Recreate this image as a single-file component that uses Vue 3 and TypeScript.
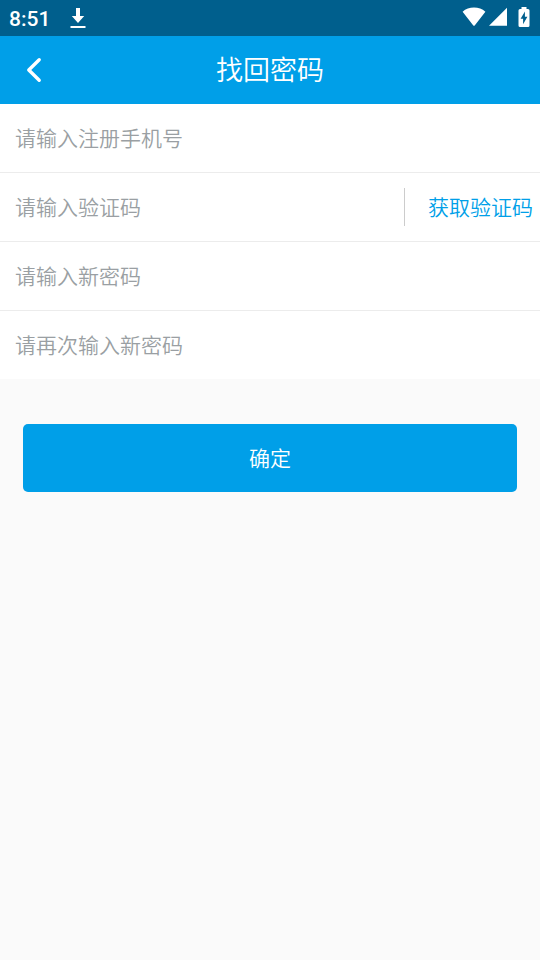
<script setup lang="ts">
import { reactive } from 'vue'

interface Field {
  key: 'phone' | 'code' | 'password' | 'confirm'
  type: string
  placeholder: string
}

const fields: Field[] = [
  { key: 'phone', type: 'tel', placeholder: '请输入注册手机号' },
  { key: 'code', type: 'text', placeholder: '请输入验证码' },
  { key: 'password', type: 'password', placeholder: '请输入新密码' },
  { key: 'confirm', type: 'password', placeholder: '请再次输入新密码' },
]

const form = reactive({ phone: '', code: '', password: '', confirm: '' })
</script>

<template>
  <div class="screen">
    <div class="status">
      <span class="time">8:51</span>
      <svg class="download" width="16" height="20" viewBox="0 0 16 20" aria-hidden="true">
        <path d="M6 0h4v8h4.200L8 15 1.800 8H6z" fill="#fff" />
        <path d="M.5 18h15v2H.5z" fill="#fff" />
      </svg>
      <div class="indicators">
        <svg width="24" height="20" viewBox="0 0 24 20" aria-hidden="true">
          <path d="M.6 4.700C3.700 2.100 7.700.6 12 .6s8.300 1.500 11.400 4.100L12.700 18.400q-.7.900-1.400 0z" fill="#fff" />
        </svg>
        <svg width="20" height="20" viewBox="0 0 20 20" aria-hidden="true">
          <path d="M19 .8V18.800H1z" fill="#fff" />
        </svg>
        <svg class="battery" width="12" height="20" viewBox="0 0 12 20" aria-hidden="true">
          <path d="M3.500 0h5v2H10q1.500 0 1.500 1.500v15Q11.500 20 10 20H2Q.5 20 .5 18.500v-15Q.5 2 2 2h1.500z" fill="#fff" />
          <path d="M6.900 4.500 2.600 11.700h2.500v5.600l4.300-7.600H6.900z" fill="#005f8d" />
        </svg>
      </div>
    </div>

    <header class="header">
      <button class="back" type="button" aria-label="返回">
        <svg width="16" height="26" viewBox="0 0 16 26" fill="none" aria-hidden="true">
          <path d="M13.200 2.800 2.800 13l10.400 10.200" stroke="#fff" stroke-width="3.400" stroke-linecap="round" stroke-linejoin="round" />
        </svg>
      </button>
      <h1 class="title">找回密码</h1>
    </header>

    <form @submit.prevent>
      <div class="fields">
        <div v-for="field in fields" :key="field.key" class="row">
          <input
            v-model="form[field.key]"
            class="input"
            :type="field.type"
            :placeholder="field.placeholder"
            :aria-label="field.placeholder"
          />
          <button v-if="field.key === 'code'" class="get-code" type="button">获取验证码</button>
        </div>
      </div>
      <div class="actions">
        <button class="submit" type="submit">确定</button>
      </div>
    </form>
  </div>
</template>

<style>
body {
  background: #fafafa;
}
</style>

<style scoped>
.screen {
  min-height: 100vh;
  background: #fafafa;
  font-family: Roboto, "Noto Sans CJK SC", sans-serif;
  font-weight: 350;
}

button,
input {
  box-sizing: border-box;
  margin: 0;
  padding: 0;
  border: 0;
  border-radius: 0;
  background: none;
  font: inherit;
}

button {
  cursor: pointer;
}

.status {
  display: flex;
  align-items: center;
  height: 36px;
  padding: 0 10px 0 9px;
  background: #005f8d;
  color: #fff;
}

.time {
  padding-top: 2px;
  font-size: 21px;
  font-weight: 500;
  line-height: 24px;
}

.download {
  margin-left: 20px;
}

.indicators {
  display: flex;
  align-items: center;
  gap: 2px;
  margin-left: auto;
  padding-bottom: 2px;
}

.battery {
  margin-left: 8px;
}

.header {
  display: grid;
  grid-template-columns: 68px 1fr 68px;
  align-items: center;
  height: 68px;
  background: #009fe8;
  color: #fff;
}

.back {
  display: flex;
  align-items: center;
  justify-content: center;
  height: 68px;
  color: #fff;
}

.title {
  margin: 0;
  padding-top: 2px;
  font-size: 27px;
  font-weight: inherit;
  line-height: 40px;
  text-align: center;
}

.fields {
  background: #fff;
}

.row {
  display: flex;
  align-items: center;
  height: 68px;
}

.row + .row {
  border-top: 1px solid #ececec;
}

.input {
  flex: 1;
  min-width: 0;
  height: 68px;
  padding: 2px 15px 0;
  color: #333;
  font-size: 21px;
  outline: none;
}

.input::placeholder {
  color: #9a9fa3;
  opacity: 1;
}

.get-code {
  height: 38px;
  padding: 2px 7px 0 23px;
  border-left: 1px solid #ccc;
  color: #009fe8;
  font-size: 21px;
  line-height: 36px;
  white-space: nowrap;
}

.actions {
  padding: 45px 23px;
}

.submit {
  width: 100%;
  height: 68px;
  padding-bottom: 2px;
  border-radius: 5px;
  background: #009fe8;
  color: #fff;
  font-size: 21px;
}
</style>
